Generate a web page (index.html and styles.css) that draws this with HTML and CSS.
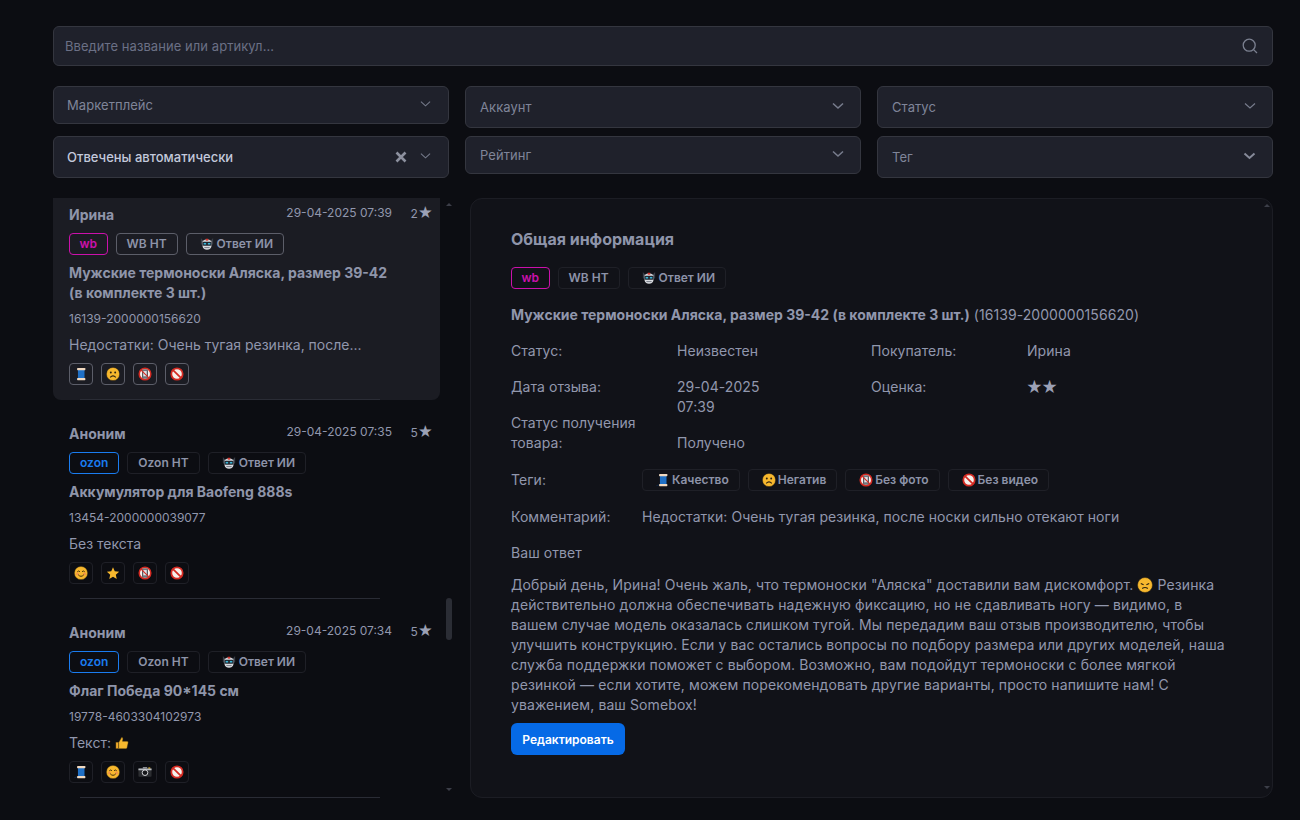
FILE: index.html
```html
<!DOCTYPE html>
<html lang="ru">
<head>
<meta charset="utf-8">
<title>Отзывы</title>
<link rel="stylesheet" href="styles.css">
</head>
<body>
<svg class="defs" aria-hidden="true">
  <symbol id="e-robot" viewBox="0 0 16 16">
    <path d="M1 1l2.5 3v6L1 8zM15 1l-2.500 3v6L15 8z" fill="#3a3f48"/>
    <path d="M3 4.500Q8 .5 13 4.500V11q-1 3.500-5 3.500T3 11z" fill="#d9dbe0"/>
    <rect x="6.600" y="2" width="2.800" height="2.200" fill="#d6362f"/>
    <rect x="3" y="5.500" width="10" height="4.500" rx="1.200" fill="#20262e"/>
    <rect x="4.200" y="6.800" width="2.800" height="1.800" fill="#39b6d8"/>
    <rect x="9" y="6.800" width="2.800" height="1.800" fill="#39b6d8"/>
    <rect x="5" y="11.500" width="6" height="1.200" fill="#7a7f88"/>
  </symbol>
  <symbol id="e-spool" viewBox="0 0 16 16">
    <path d="M0.500 14.500q2-.2 3.500-1" fill="none" stroke="#10243f" stroke-width="1.300"/>
    <rect x="4.500" y="3" width="7.500" height="10" fill="#1f6fc4"/>
    <rect x="3.500" y="1" width="9.500" height="2.600" rx=".8" fill="#f1d9c0"/>
    <rect x="3.500" y="12.500" width="9.500" height="2.600" rx=".8" fill="#f1d9c0"/>
  </symbol>
  <symbol id="e-frown" viewBox="0 0 16 16">
    <circle cx="8" cy="8" r="7.500" fill="#f7b82e" stroke="#2b2110" stroke-width=".5"/>
    <circle cx="5.500" cy="6.200" r="1.100" fill="#2b2110"/>
    <circle cx="10.500" cy="6.200" r="1.100" fill="#2b2110"/>
    <path d="M4.800 11.800q3.200-3.200 6.400 0" fill="none" stroke="#2b2110" stroke-width="1.300"/>
  </symbol>
  <symbol id="e-sad" viewBox="0 0 16 16">
    <circle cx="8" cy="8" r="7.500" fill="#f7b82e" stroke="#2b2110" stroke-width=".5"/>
    <path d="M3.800 6.500l2.800 1.300M12.200 6.500L9.400 7.800M5.200 11.500q2.800-2 5.600 0" fill="none" stroke="#2b2110" stroke-width="1.100"/>
  </symbol>
  <symbol id="e-smile" viewBox="0 0 16 16">
    <circle cx="8" cy="8" r="7.500" fill="#f7b82e" stroke="#5a4312" stroke-width=".5"/>
    <circle cx="3.900" cy="9" r="1.500" fill="#f2904c"/>
    <circle cx="12.100" cy="9" r="1.500" fill="#f2904c"/>
    <path d="M3.800 6.500q1.500-1.600 3 0M9.200 6.500q1.500-1.600 3 0M4.800 10q3.200 3.600 6.400 0" fill="none" stroke="#3b2c0c" stroke-width="1.100"/>
  </symbol>
  <symbol id="e-star" viewBox="0 0 16 16">
    <path d="M8 1.500l2 4.600 5 .5-3.800 3.300 1.100 4.900L8 12.300l-4.300 2.500 1.100-4.900L1 6.600l5-.5z" fill="#f7b82e"/>
  </symbol>
  <symbol id="e-nophone" viewBox="0 0 16 16">
    <circle cx="8" cy="8" r="6.600" fill="#f4f1ee" stroke="#d42a22" stroke-width="1.800"/>
    <rect x="5.200" y="3.300" width="5.600" height="9.400" rx=".8" fill="#8f939b" stroke="#33363c" stroke-width=".9"/>
    <rect x="6.200" y="4.700" width="3.600" height="5.600" fill="#e3e5e8"/>
    <path d="M3.200 3.200l9.600 9.600" stroke="#d42a22" stroke-width="1.300"/>
  </symbol>
  <symbol id="e-noentry" viewBox="0 0 16 16">
    <circle cx="8" cy="8" r="6.500" fill="#f6f1ec" stroke="#d42a22" stroke-width="2"/>
    <path d="M3.200 3.200l9.600 9.600" stroke="#d42a22" stroke-width="2"/>
  </symbol>
  <symbol id="e-camera" viewBox="0 0 16 16">
    <rect x="0.500" y="4" width="15" height="9.500" rx=".8" fill="#2b2d31"/>
    <rect x="0.500" y="4" width="15" height="2" fill="#b9bcc1"/>
    <rect x="5.500" y="2.300" width="5" height="2" fill="#8b8e94"/>
    <rect x="11.800" y="2.800" width="2.200" height="1.300" fill="#f2c43c"/>
    <circle cx="8" cy="8.800" r="3.200" fill="#16171a" stroke="#e6e7ea" stroke-width="1"/>
  </symbol>
  <symbol id="e-thumb" viewBox="0 0 16 16">
    <rect x="1" y="7" width="3.200" height="7.500" fill="#f0a92a" stroke="#3b2c0c" stroke-width=".5"/>
    <path d="M4.200 7.500L7.600 1.500q1.800.2 1.500 2L8.600 6H14q1.500.3 1 2l-1.200 5.500q-.3 1-1.400 1H4.200z" fill="#f7b82e" stroke="#3b2c0c" stroke-width=".5"/>
  </symbol>
</svg>
<div class="page">
  <div class="search">
    <span class="placeholder">Введите название или артикул...</span>
    <svg class="search-icon" viewBox="0 0 16 16"><circle cx="7.200" cy="7.200" r="6"/><path d="M11.600 11.600 15 15"/></svg>
  </div>
  <div class="filters">
    <div class="filter-col">
      <div class="select short wide-gap"><span class="select-label">Маркетплейс</span><svg class="chev thin" viewBox="0 0 12 8"><path d="M1 1.500 6 6l5-4.500"/></svg></div>
      <div class="select tall"><span class="select-label active">Отвечены автоматически</span><svg class="clear" viewBox="0 0 12 12"><path d="M1.500 1.500l9 9M10.500 1.500l-9 9"/></svg><svg class="chev thin" viewBox="0 0 12 8"><path d="M1 1.500 6 6l5-4.500"/></svg></div>
    </div>
    <div class="filter-col">
      <div class="select tall"><span class="select-label">Аккаунт</span><svg class="chev mid" viewBox="0 0 12 8"><path d="M1 1.500 6 6l5-4.500"/></svg></div>
      <div class="select short"><span class="select-label">Рейтинг</span><svg class="chev mid" viewBox="0 0 12 8"><path d="M1 1.500 6 6l5-4.500"/></svg></div>
    </div>
    <div class="filter-col">
      <div class="select tall"><span class="select-label">Статус</span><svg class="chev" viewBox="0 0 12 8"><path d="M1 1.500 6 6l5-4.500"/></svg></div>
      <div class="select tall"><span class="select-label">Тег</span><svg class="chev bold" viewBox="0 0 12 8"><path d="M1 1.500 6 6l5-4.500"/></svg></div>
    </div>
  </div>
  <div class="content">
    <div class="list-wrap">
      <div class="list">
        <div class="item selected">
          <div class="item-head"><span class="name">Ирина</span><span class="date">29-04-2025 07:39</span><span class="rate">2<span class="star">★</span></span></div>
          <div class="tags"><span class="tag wb">wb</span><span class="tag">WB НТ</span><span class="tag"><svg class="emo"><use href="#e-robot"/></svg>Ответ ИИ</span></div>
          <div class="title">Мужские термоноски Аляска, размер 39-42<br>(в комплекте 3 шт.)</div>
          <div class="sku">16139-2000000156620</div>
          <div class="text">Недостатки: Очень тугая резинка, после...</div>
          <div class="icons"><span class="ico"><svg class="ico-svg"><use href="#e-spool"/></svg></span><span class="ico"><svg class="ico-svg"><use href="#e-frown"/></svg></span><span class="ico"><svg class="ico-svg"><use href="#e-nophone"/></svg></span><span class="ico"><svg class="ico-svg"><use href="#e-noentry"/></svg></span></div>
        </div>
        <div class="item">
          <div class="item-head"><span class="name">Аноним</span><span class="date">29-04-2025 07:35</span><span class="rate">5<span class="star">★</span></span></div>
          <div class="tags"><span class="tag ozon">ozon</span><span class="tag">Ozon НТ</span><span class="tag"><svg class="emo"><use href="#e-robot"/></svg>Ответ ИИ</span></div>
          <div class="title">Аккумулятор для Baofeng 888s</div>
          <div class="sku">13454-2000000039077</div>
          <div class="text">Без текста</div>
          <div class="icons"><span class="ico"><svg class="ico-svg"><use href="#e-smile"/></svg></span><span class="ico"><svg class="ico-svg"><use href="#e-star"/></svg></span><span class="ico"><svg class="ico-svg"><use href="#e-nophone"/></svg></span><span class="ico"><svg class="ico-svg"><use href="#e-noentry"/></svg></span></div>
        </div>
        <div class="item">
          <div class="item-head"><span class="name">Аноним</span><span class="date">29-04-2025 07:34</span><span class="rate">5<span class="star">★</span></span></div>
          <div class="tags"><span class="tag ozon">ozon</span><span class="tag">Ozon НТ</span><span class="tag"><svg class="emo"><use href="#e-robot"/></svg>Ответ ИИ</span></div>
          <div class="title">Флаг Победа 90*145 см</div>
          <div class="sku">19778-4603304102973</div>
          <div class="text">Текст: <svg class="inline-emo"><use href="#e-thumb"/></svg></div>
          <div class="icons"><span class="ico"><svg class="ico-svg"><use href="#e-spool"/></svg></span><span class="ico"><svg class="ico-svg"><use href="#e-smile"/></svg></span><span class="ico"><svg class="ico-svg"><use href="#e-camera"/></svg></span><span class="ico"><svg class="ico-svg"><use href="#e-noentry"/></svg></span></div>
        </div>
      </div>
      <span class="arrow up list-arrow-up"></span>
      <span class="thumb"></span>
      <span class="arrow down list-arrow-down"></span>
    </div>
    <div class="detail">
      <h2 class="detail-h">Общая информация</h2>
      <div class="tags"><span class="tag wb">wb</span><span class="tag">WB НТ</span><span class="tag"><svg class="emo"><use href="#e-robot"/></svg>Ответ ИИ</span></div>
      <div class="product"><b>Мужские термоноски Аляска, размер 39-42 (в комплекте 3 шт.)</b> (16139-2000000156620)</div>
      <div class="info">
        <span class="lab">Статус:</span><span class="val">Неизвестен</span><span class="lab">Покупатель:</span><span class="val">Ирина</span>
        <span class="lab">Дата отзыва:</span><span class="val date-val">29-04-2025 07:39</span><span class="lab">Оценка:</span><span class="val stars">★★</span>
      </div>
      <div class="info recv"><span class="lab">Статус получения товара:</span><span class="val">Получено</span></div>
      <div class="row-tags"><span class="lab2">Теги:</span>
        <div class="tags"><span class="tag"><svg class="emo"><use href="#e-spool"/></svg>Качество</span><span class="tag"><svg class="emo"><use href="#e-frown"/></svg>Негатив</span><span class="tag"><svg class="emo"><use href="#e-nophone"/></svg>Без фото</span><span class="tag"><svg class="emo"><use href="#e-noentry"/></svg>Без видео</span></div>
      </div>
      <div class="row-comment"><span class="lab2">Комментарий:</span><span>Недостатки: Очень тугая резинка, после носки сильно отекают ноги</span></div>
      <div class="answer-h">Ваш ответ</div>
      <p class="answer">Добрый день, Ирина! Очень жаль, что термоноски "Аляска" доставили вам дискомфорт. <svg class="inline-emo sad"><use href="#e-sad"/></svg> Резинка действительно должна обеспечивать надежную фиксацию, но не сдавливать ногу — видимо, в вашем случае модель оказалась слишком тугой. Мы передадим ваш отзыв производителю, чтобы улучшить конструкцию. Если у вас остались вопросы по подбору размера или других моделей, наша служба поддержки поможет с выбором. Возможно, вам подойдут термоноски с более мягкой резинкой — если хотите, можем порекомендовать другие варианты, просто напишите нам! С уважением, ваш Somebox!</p>
      <button class="edit">Редактировать</button>
      <span class="arrow up detail-arrow-up"></span>
      <span class="arrow down detail-arrow-down"></span>
    </div>
  </div>
</div>
</body>
</html>
```
FILE: styles.css
```css
* { box-sizing: border-box; }
html, body { margin: 0; height: 100%; }
body {
  background: #0c0d12;
  color: #9197ad;
  font-family: Inter, "Noto Sans", sans-serif;
  font-size: 14px;
  line-height: 20px;
  letter-spacing: .06px;
  overflow: hidden;
}
.defs { position: absolute; width: 0; height: 0; }
.page { width: 1300px; height: 820px; padding: 26px 27px 0 53px; }

.search {
  height: 40px;
  display: flex;
  align-items: center;
  justify-content: space-between;
  padding: 0 14px 0 11px;
  background: #1f212b;
  border: 1px solid #34363f;
  border-radius: 6px;
}
.placeholder { font-size: 13px; color: #6b7085; }
.search-icon { width: 16px; height: 16px; fill: none; stroke: #7b8090; stroke-width: 1.3; }

.filters { display: flex; gap: 16px; margin-top: 20px; }
.filter-col { flex: 1; height: 92px; display: flex; flex-direction: column; gap: 8px; }
.select {
  display: flex;
  align-items: center;
  padding: 0 16px 0 14px;
  background: #1f212b;
  border: 1px solid #34363f;
  border-radius: 6px;
}
.filter-col:first-child .select { padding-left: 13px; }
.select.short { height: 38px; }
.select.tall { height: 42px; }
.select.wide-gap { margin-bottom: 4px; }
.select-label { flex: 1; font-size: 13px; color: #7f8599; }
.select-label.active { color: #c3c9dc; font-weight: 500; letter-spacing: 0; }
.chev { width: 12px; height: 8px; fill: none; stroke: #777c8c; stroke-width: 1.2; margin-bottom: 2px; }
.chev.thin { width: 11px; stroke-width: 1.1; margin-right: 1px; margin-bottom: 3px; }
.chev.mid { stroke-width: 1.6; }
.chev.bold { stroke: #868a99; stroke-width: 2; width: 13px; }
.clear { width: 12px; height: 12px; fill: none; stroke: #8c909e; stroke-width: 2.6; margin-right: 13px; }

.content { display: flex; gap: 18px; margin-top: 20px; height: 600px; }
.list-wrap { position: relative; width: 399px; height: 600px; flex: none; overflow: hidden; }
.list { width: 387px; margin-top: -17px; }
.item { padding: 24px 8px 14px 16px; height: 199px; position: relative; }
.item::after {
  content: "";
  position: absolute;
  left: 27px;
  right: 60px;
  bottom: 0;
  height: 1px;
  background: #2a2c35;
}
.item.selected { height: 219px; background: #1b1c23; border-radius: 8px; }
.item-head { display: flex; align-items: center; height: 20px; }
.name { flex: 1; font-weight: 700; color: #8f95aa; letter-spacing: 0; }
.date { font-size: 12px; letter-spacing: 0; position: relative; top: -2px; }
.rate { font-size: 12px; width: 40px; letter-spacing: 0; text-align: right; position: relative; top: -2px; }
.star { font-size: 14.5px; color: #9ba0b5; margin-right: -1px; }
.tags { display: flex; gap: 8px; margin-top: 8px; }
.tag {
  height: 22px;
  display: flex;
  align-items: center;
  padding: 0 10px;
  font-size: 12px;
  font-weight: 600;
  color: #8d93a8;
  letter-spacing: 0;
  border: 1px solid #1f2027;
  border-radius: 4px;
  white-space: nowrap;
}
.selected .tag { border-color: #5c5e69; }
.tag.wb, .selected .tag.wb { color: #cb11ab; border-color: #cb11ab; padding: 0 9.5px; }
.tag.ozon { color: #1a7cf0; border-color: #1a7cf0; padding: 0 10px; }
.emo { width: 14px; height: 14px; margin: 0 3px; flex: none; }
.row-tags .emo { margin: 0 2px 0 3px; }
.inline-emo { width: 14px; height: 14px; vertical-align: -2px; }
.inline-emo.sad { width: 16px; height: 16px; vertical-align: -3px; }
.title { margin-top: 8px; font-weight: 700; color: #8f95aa; letter-spacing: 0; }
.sku { margin-top: 6px; font-size: 12px; letter-spacing: 0; }
.text { margin-top: 6px; letter-spacing: 0; }
.icons { display: flex; gap: 8px; margin-top: 8px; }
.ico {
  width: 24px;
  height: 22px;
  display: flex;
  align-items: center;
  justify-content: center;
  border: 1px solid #1f2027;
  border-radius: 4px;
}
.ico-svg { width: 14px; height: 14px; }
.selected .ico { border-color: #5c5e69; }

.thumb { position: absolute; left: 393px; top: 400px; width: 6px; height: 42px; background: #2b2d35; border-radius: 3px; }
.arrow { position: absolute; width: 0; height: 0; border-left: 3px solid transparent; border-right: 3px solid transparent; }
.arrow.up { border-bottom: 3px solid #3c3e48; }
.arrow.down { border-top: 3px solid #3c3e48; }
.list-arrow-up { left: 393px; top: 5px; }
.list-arrow-down { left: 393px; top: 590px; }
.detail-arrow-up { right: 2px; top: 5px; }
.detail-arrow-down { right: 2px; bottom: 8px; }

.detail {
  position: relative;
  flex: 1;
  padding: 28px 40px 0;
  background: #111218;
  border: 1px solid #1c1d24;
  border-radius: 12px;
}
.detail-h { margin: 0; font-size: 16px; line-height: 24px; font-weight: 700; color: #8f95aa; letter-spacing: 0; }
.detail .tags { margin-top: 16px; }
.product { margin-top: 16px; }
.product b { font-weight: 700; letter-spacing: 0; }
.info { display: grid; grid-template-columns: 166px 194px 156px 1fr; row-gap: 16px; margin-top: 16px; grid-auto-rows: 20px; }
.date-val { width: 90px; }
.stars { font-size: 16px; color: #9ba0b5; letter-spacing: -1.5px; margin-left: -1px; }
.info.recv { grid-auto-rows: 40px; }
.recv .lab { width: 150px; }
.recv .val { align-self: end; }
.row-tags { display: flex; align-items: center; margin-top: 16px; }
.row-tags .tags { margin-top: 0; }
.lab2 { width: 131px; flex: none; }
.row-comment { display: flex; margin-top: 16px; }
.answer-h { margin-top: 16px; }
.answer { margin: 12px 0 0; width: 716px; letter-spacing: .1px; }
.edit {
  display: block;
  margin-top: 8px;
  width: 114px;
  height: 32px;
  border: 0;
  border-radius: 6px;
  background: #066ae6;
  color: #fff;
  font: 600 12px/32px Inter, sans-serif;
}
```
